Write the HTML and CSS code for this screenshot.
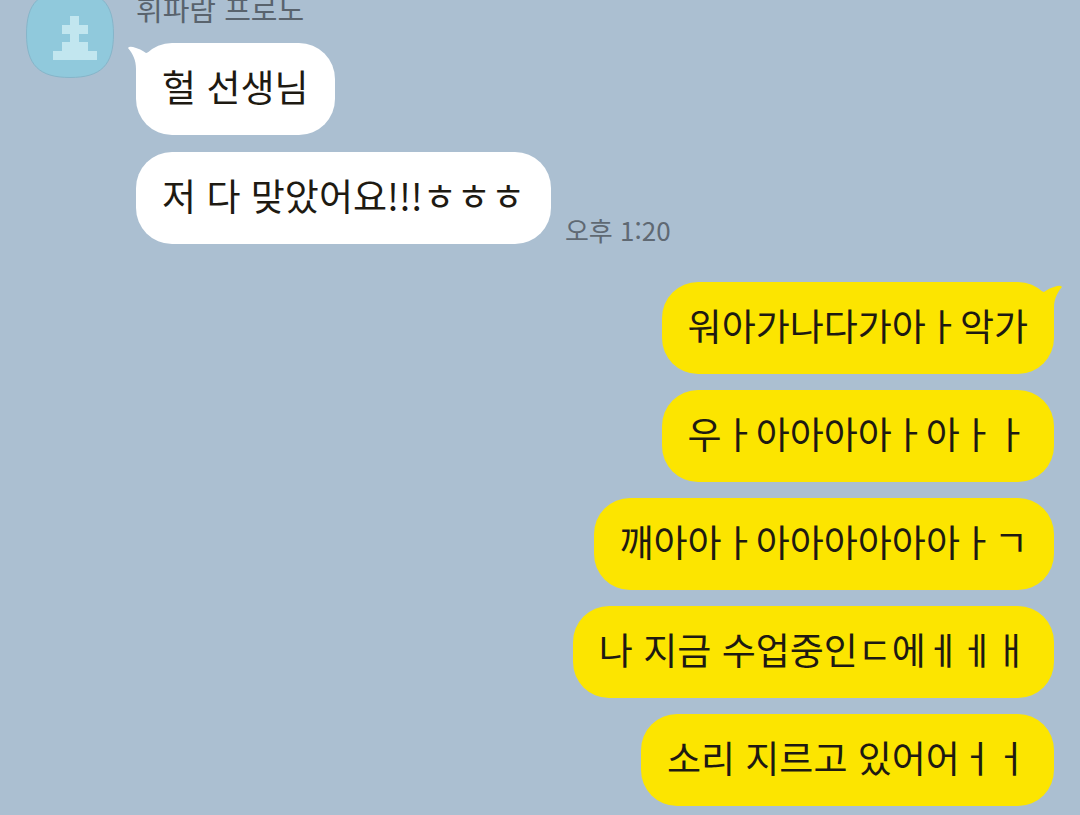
FILE: index.html
```html
<!DOCTYPE html>
<html lang="ko">

<head>
    <meta charset="UTF-8">
    <meta name="viewport" content="width=device-width, initial-scale=1.0">
    <title>채팅</title>
    <link rel="stylesheet" href="styles.css">
</head>

<body>
    <main class="chat">
        <section class="group received">
            <svg class="avatar" viewBox="0 0 88 88" aria-hidden="true">
                <path class="avatar-bg" d="M44 .5C75 .5 87.500 13 87.500 44S75 87.500 44 87.500.5 75 .5 44 13 .5 44 .5z" />
                <path class="avatar-icon" d="M44 26h9v9h9v9h-9v8h9v9h9v9H27v-9h9v-9h8v-8h-8v-9h8z" />
            </svg>
            <div class="messages">
                <div class="name">휘파람 프로도</div>
                <div class="bubble">
                    헐 선생님
                    <svg class="tail" viewBox="0 0 26 36" aria-hidden="true">
                        <path d="M0 3Q1 1 5 2Q13 4 18 8L26 6V36H8V24C8 15 5 9 0 3z" />
                    </svg>
                </div>
                <div class="row">
                    <div class="bubble">저 다 맞았어요!!!ㅎㅎㅎ</div>
                    <time class="time" datetime="13:20">오후 1:20</time>
                </div>
            </div>
        </section>

        <section class="group sent">
            <div class="messages">
                <div class="bubble">
                    워아가나다가아ㅏ악가
                    <svg class="tail" viewBox="0 0 26 36" aria-hidden="true">
                        <path d="M0 3Q1 1 5 2Q13 4 18 8L26 6V36H8V24C8 15 5 9 0 3z" />
                    </svg>
                </div>
                <div class="bubble">우ㅏ아아아아ㅏ아ㅏㅏ</div>
                <div class="bubble">깨아아ㅏ아아아아아아ㅏㄱ</div>
                <div class="bubble">나 지금 수업중인ㄷ에ㅔㅔㅐ</div>
                <div class="bubble">소리 지르고 있어어ㅓㅓ</div>
            </div>
        </section>
    </main>
</body>

</html>
```
FILE: styles.css
```css
body {
    margin: 0;
    background-color: #abbfd1;
    color: #1e1a12;
    font-family: "Noto Sans CJK KR", sans-serif;
}

/* newest message stays at the bottom, older ones go off the top */
.chat {
    display: flex;
    flex-direction: column;
    justify-content: flex-end;
    gap: 38px;
    box-sizing: border-box;
    height: 100vh;
    padding: 0 26px 9px;
    overflow: hidden;
}

.group {
    display: flex;
    flex-shrink: 0;
    gap: 22px;
}

.sent {
    justify-content: flex-end;
}

.messages {
    display: flex;
    flex-direction: column;
    align-items: flex-start;
    gap: 17px;
}

.sent .messages {
    align-items: flex-end;
    gap: 16px;
}

.avatar {
    width: 88px;
    height: 88px;
    flex-shrink: 0;
}

.avatar-bg {
    fill: #90c9dc;
    stroke: #86b5c9;
}

.avatar-icon {
    fill: #c2e6ef;
}

.name {
    font-size: 29px;
    line-height: 36px;
    color: #59636d;
}

.row {
    display: flex;
    align-items: flex-end;
    gap: 14px;
}

.bubble {
    position: relative;
    padding: 16px 26px 22px;
    border-radius: 36px;
    background-color: #fff;
    font-size: 37px;
    line-height: 54px;
}

.sent .bubble {
    background-color: #fce500;
}

.tail {
    position: absolute;
    top: 2px;
    left: -8px;
    width: 26px;
    height: 36px;
    fill: #fff;
}

.sent .tail {
    left: auto;
    right: -8px;
    transform: scaleX(-1);
    fill: #fce500;
}

.time {
    font-size: 26px;
    line-height: 28px;
    color: #5f6973;
}
```
